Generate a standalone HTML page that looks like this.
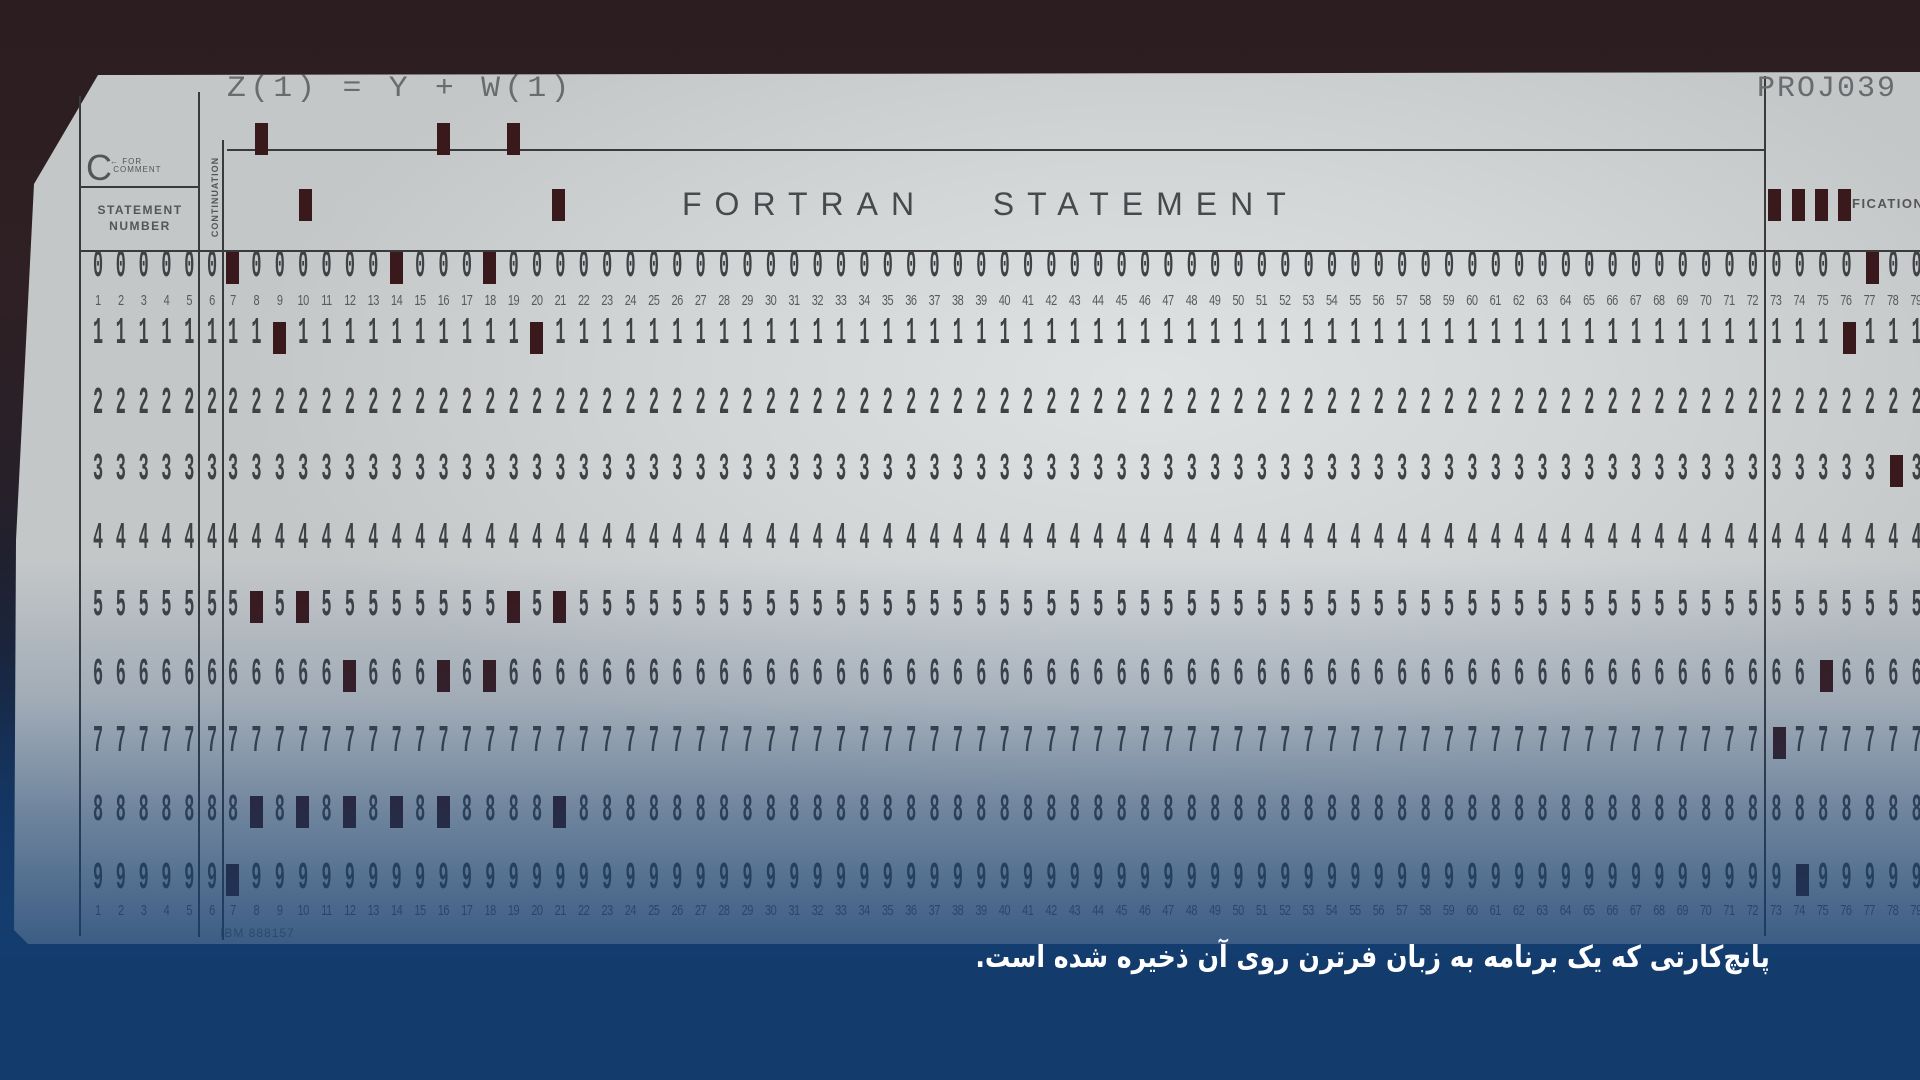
<!DOCTYPE html>
<html><head><meta charset="utf-8">
<style>
*{margin:0;padding:0;box-sizing:border-box}
html,body{width:1920px;height:1080px;overflow:hidden}
body{position:relative;background:linear-gradient(180deg,#2c1d20 0,#2e2024 300px,#272029 480px,#1a2135 650px,#14305a 820px,#123a6b 940px);font-family:"Liberation Sans",sans-serif}
.card{position:absolute;left:0;top:0;width:1920px;height:1080px;
clip-path:polygon(98px 75px,1920px 72px,1920px 944px,28px 944px,14px 930px,16px 540px,34px 184px);
background:radial-gradient(ellipse 900px 420px at 1150px 380px,#dfe2e3 0,#d3d6d7 50%,#c4c7c8 100%)}
.row,.rowl{position:absolute;font-family:"Liberation Mono",monospace;font-size:28px;line-height:28px;color:#404145;font-weight:bold;white-space:pre;transform-origin:0 50%;transform:scale(0.6,1.35)}
.row{left:228px;letter-spacing:22.17px}
.rowl{left:93px;letter-spacing:21.2px}
.p{position:absolute;width:13px;height:32px;background:#3a191c}
.ln{position:absolute;background:#3a3a3c}
.tiny{position:absolute;display:flex;font-family:"Liberation Sans",sans-serif;font-size:11px;color:#58595c;transform:scaleY(1.3)}
.tiny i{font-style:normal;width:23.38px;text-align:center;letter-spacing:-0.5px}
.tiny.l i{width:22.8px}
.ov{position:absolute;left:0;top:0;width:1920px;height:1080px;background:linear-gradient(180deg,rgba(20,62,112,0) 0,rgba(20,62,112,0) 560px,rgba(20,62,112,0.2) 700px,rgba(20,62,112,0.5) 820px,rgba(20,62,112,0.72) 920px,rgba(20,62,112,0.8) 957px,#133b6c 958px,#133b6c 1080px)}
.cap{position:absolute;right:150px;top:940px;color:#fff;font-family:"DejaVu Sans",sans-serif;font-weight:bold;font-size:30px;direction:rtl;white-space:nowrap;transform:scaleX(0.84);transform-origin:100% 0}
</style></head><body>
<div class="card"></div>
<div class="ln" style="left:79px;top:96px;width:2px;height:840px"></div>
<div class="ln" style="left:198px;top:92px;width:2px;height:845px"></div>
<div class="ln" style="left:222px;top:140px;width:2px;height:800px"></div>
<div class="ln" style="left:1764px;top:76px;width:2px;height:860px"></div>
<div class="ln" style="left:227px;top:149px;width:1538px;height:2px"></div>
<div class="ln" style="left:80px;top:186px;width:120px;height:2px"></div>
<div class="ln" style="left:80px;top:250px;width:1840px;height:2px"></div>
<div style="position:absolute;left:227px;top:72px;font-family:'Liberation Mono',monospace;font-size:30px;color:#6a6b6e;letter-spacing:4px;white-space:pre;transform:scaleX(1.05);transform-origin:0 0">Z(1) = Y + W(1)</div>
<div style="position:absolute;left:1757px;top:72px;font-family:'Liberation Mono',monospace;font-size:30px;color:#6a6b6e;letter-spacing:2px;white-space:pre">PROJ039</div>
<div style="position:absolute;left:86px;top:150px;font-size:36px;color:#555;line-height:36px">C</div>
<div style="position:absolute;left:110px;top:158px;font-size:8px;color:#555;line-height:8px;letter-spacing:1px">&#8592; FOR<br>&nbsp;COMMENT</div>
<div style="position:absolute;left:82px;top:202px;width:116px;text-align:center;font-size:12px;font-weight:bold;color:#555;letter-spacing:1.5px;line-height:16px">STATEMENT<br>NUMBER</div>
<div style="position:absolute;left:160px;top:192px;width:110px;text-align:center;font-size:9px;font-weight:bold;color:#555;letter-spacing:1px;transform:rotate(-90deg)">CONTINUATION</div>
<div style="position:absolute;left:682px;top:186px;font-size:32px;color:#48494c;letter-spacing:13px;white-space:pre">FORTRAN   STATEMENT</div>
<div style="position:absolute;left:1852px;top:196px;font-size:13px;font-weight:bold;color:#555;letter-spacing:1.5px">FICATION</div>
<div class="p" style="left:255px;top:123px"></div>
<div class="p" style="left:437px;top:123px"></div>
<div class="p" style="left:507px;top:123px"></div>
<div class="p" style="left:299px;top:189px"></div>
<div class="p" style="left:552px;top:189px"></div>
<div class="p" style="left:1768px;top:189px"></div>
<div class="p" style="left:1792px;top:189px"></div>
<div class="p" style="left:1815px;top:189px"></div>
<div class="p" style="left:1838px;top:189px"></div>
<div class="rowl" style="top:254px">000000</div>
<div class="rowl" style="top:321px">111111</div>
<div class="rowl" style="top:391px">222222</div>
<div class="rowl" style="top:457px">333333</div>
<div class="rowl" style="top:526px">444444</div>
<div class="rowl" style="top:593px">555555</div>
<div class="rowl" style="top:662px">666666</div>
<div class="rowl" style="top:729px">777777</div>
<div class="rowl" style="top:798px">888888</div>
<div class="rowl" style="top:866px">999999</div>
<div class="row" style="top:254px"> 000000 000 0000000000000000000000000000000000000000000000000000000000 000</div>
<div class="row" style="top:321px">11 1111111111 1111111111111111111111111111111111111111111111111111111 1111</div>
<div class="row" style="top:391px">22222222222222222222222222222222222222222222222222222222222222222222222222</div>
<div class="row" style="top:457px">33333333333333333333333333333333333333333333333333333333333333333333333 33</div>
<div class="row" style="top:526px">44444444444444444444444444444444444444444444444444444444444444444444444444</div>
<div class="row" style="top:593px">5 5 55555555 5 55555555555555555555555555555555555555555555555555555555555</div>
<div class="row" style="top:662px">66666 666 6 66666666666666666666666666666666666666666666666666666666 66666</div>
<div class="row" style="top:729px">777777777777777777777777777777777777777777777777777777777777777777 7777777</div>
<div class="row" style="top:798px">8 8 8 8 8 8888 88888888888888888888888888888888888888888888888888888888888</div>
<div class="row" style="top:866px"> 999999999999999999999999999999999999999999999999999999999999999999 999999</div>
<div class="tiny l" style="top:295px;left:86.6px"><i>1</i><i>2</i><i>3</i><i>4</i><i>5</i><i>6</i></div>
<div class="tiny" style="top:295px;left:221.3px"><i>7</i><i>8</i><i>9</i><i>10</i><i>11</i><i>12</i><i>13</i><i>14</i><i>15</i><i>16</i><i>17</i><i>18</i><i>19</i><i>20</i><i>21</i><i>22</i><i>23</i><i>24</i><i>25</i><i>26</i><i>27</i><i>28</i><i>29</i><i>30</i><i>31</i><i>32</i><i>33</i><i>34</i><i>35</i><i>36</i><i>37</i><i>38</i><i>39</i><i>40</i><i>41</i><i>42</i><i>43</i><i>44</i><i>45</i><i>46</i><i>47</i><i>48</i><i>49</i><i>50</i><i>51</i><i>52</i><i>53</i><i>54</i><i>55</i><i>56</i><i>57</i><i>58</i><i>59</i><i>60</i><i>61</i><i>62</i><i>63</i><i>64</i><i>65</i><i>66</i><i>67</i><i>68</i><i>69</i><i>70</i><i>71</i><i>72</i><i>73</i><i>74</i><i>75</i><i>76</i><i>77</i><i>78</i><i>79</i><i>80</i></div>
<div class="tiny l" style="top:905px;left:86.6px"><i>1</i><i>2</i><i>3</i><i>4</i><i>5</i><i>6</i></div>
<div class="tiny" style="top:905px;left:221.3px"><i>7</i><i>8</i><i>9</i><i>10</i><i>11</i><i>12</i><i>13</i><i>14</i><i>15</i><i>16</i><i>17</i><i>18</i><i>19</i><i>20</i><i>21</i><i>22</i><i>23</i><i>24</i><i>25</i><i>26</i><i>27</i><i>28</i><i>29</i><i>30</i><i>31</i><i>32</i><i>33</i><i>34</i><i>35</i><i>36</i><i>37</i><i>38</i><i>39</i><i>40</i><i>41</i><i>42</i><i>43</i><i>44</i><i>45</i><i>46</i><i>47</i><i>48</i><i>49</i><i>50</i><i>51</i><i>52</i><i>53</i><i>54</i><i>55</i><i>56</i><i>57</i><i>58</i><i>59</i><i>60</i><i>61</i><i>62</i><i>63</i><i>64</i><i>65</i><i>66</i><i>67</i><i>68</i><i>69</i><i>70</i><i>71</i><i>72</i><i>73</i><i>74</i><i>75</i><i>76</i><i>77</i><i>78</i><i>79</i><i>80</i></div>
<div style="position:absolute;left:220px;top:926px;font-size:12px;color:#6a6b6e;letter-spacing:1px">IBM 888157</div>
<div class="p" style="left:226px;top:252px"></div>
<div class="p" style="left:390px;top:252px"></div>
<div class="p" style="left:483px;top:252px"></div>
<div class="p" style="left:1866px;top:252px"></div>
<div class="p" style="left:273px;top:322px"></div>
<div class="p" style="left:530px;top:322px"></div>
<div class="p" style="left:1843px;top:322px"></div>
<div class="p" style="left:1890px;top:455px"></div>
<div class="p" style="left:250px;top:591px"></div>
<div class="p" style="left:296px;top:591px"></div>
<div class="p" style="left:507px;top:591px"></div>
<div class="p" style="left:553px;top:591px"></div>
<div class="p" style="left:343px;top:660px"></div>
<div class="p" style="left:437px;top:660px"></div>
<div class="p" style="left:483px;top:660px"></div>
<div class="p" style="left:1820px;top:660px"></div>
<div class="p" style="left:1773px;top:727px"></div>
<div class="p" style="left:250px;top:796px"></div>
<div class="p" style="left:296px;top:796px"></div>
<div class="p" style="left:343px;top:796px"></div>
<div class="p" style="left:390px;top:796px"></div>
<div class="p" style="left:437px;top:796px"></div>
<div class="p" style="left:553px;top:796px"></div>
<div class="p" style="left:226px;top:864px"></div>
<div class="p" style="left:1796px;top:864px"></div>
<div class="ov"></div>
<div class="cap">پانچ‌کارتی که یک برنامه به زبان فرترن روی آن ذخیره شده است.</div>
</body></html>
